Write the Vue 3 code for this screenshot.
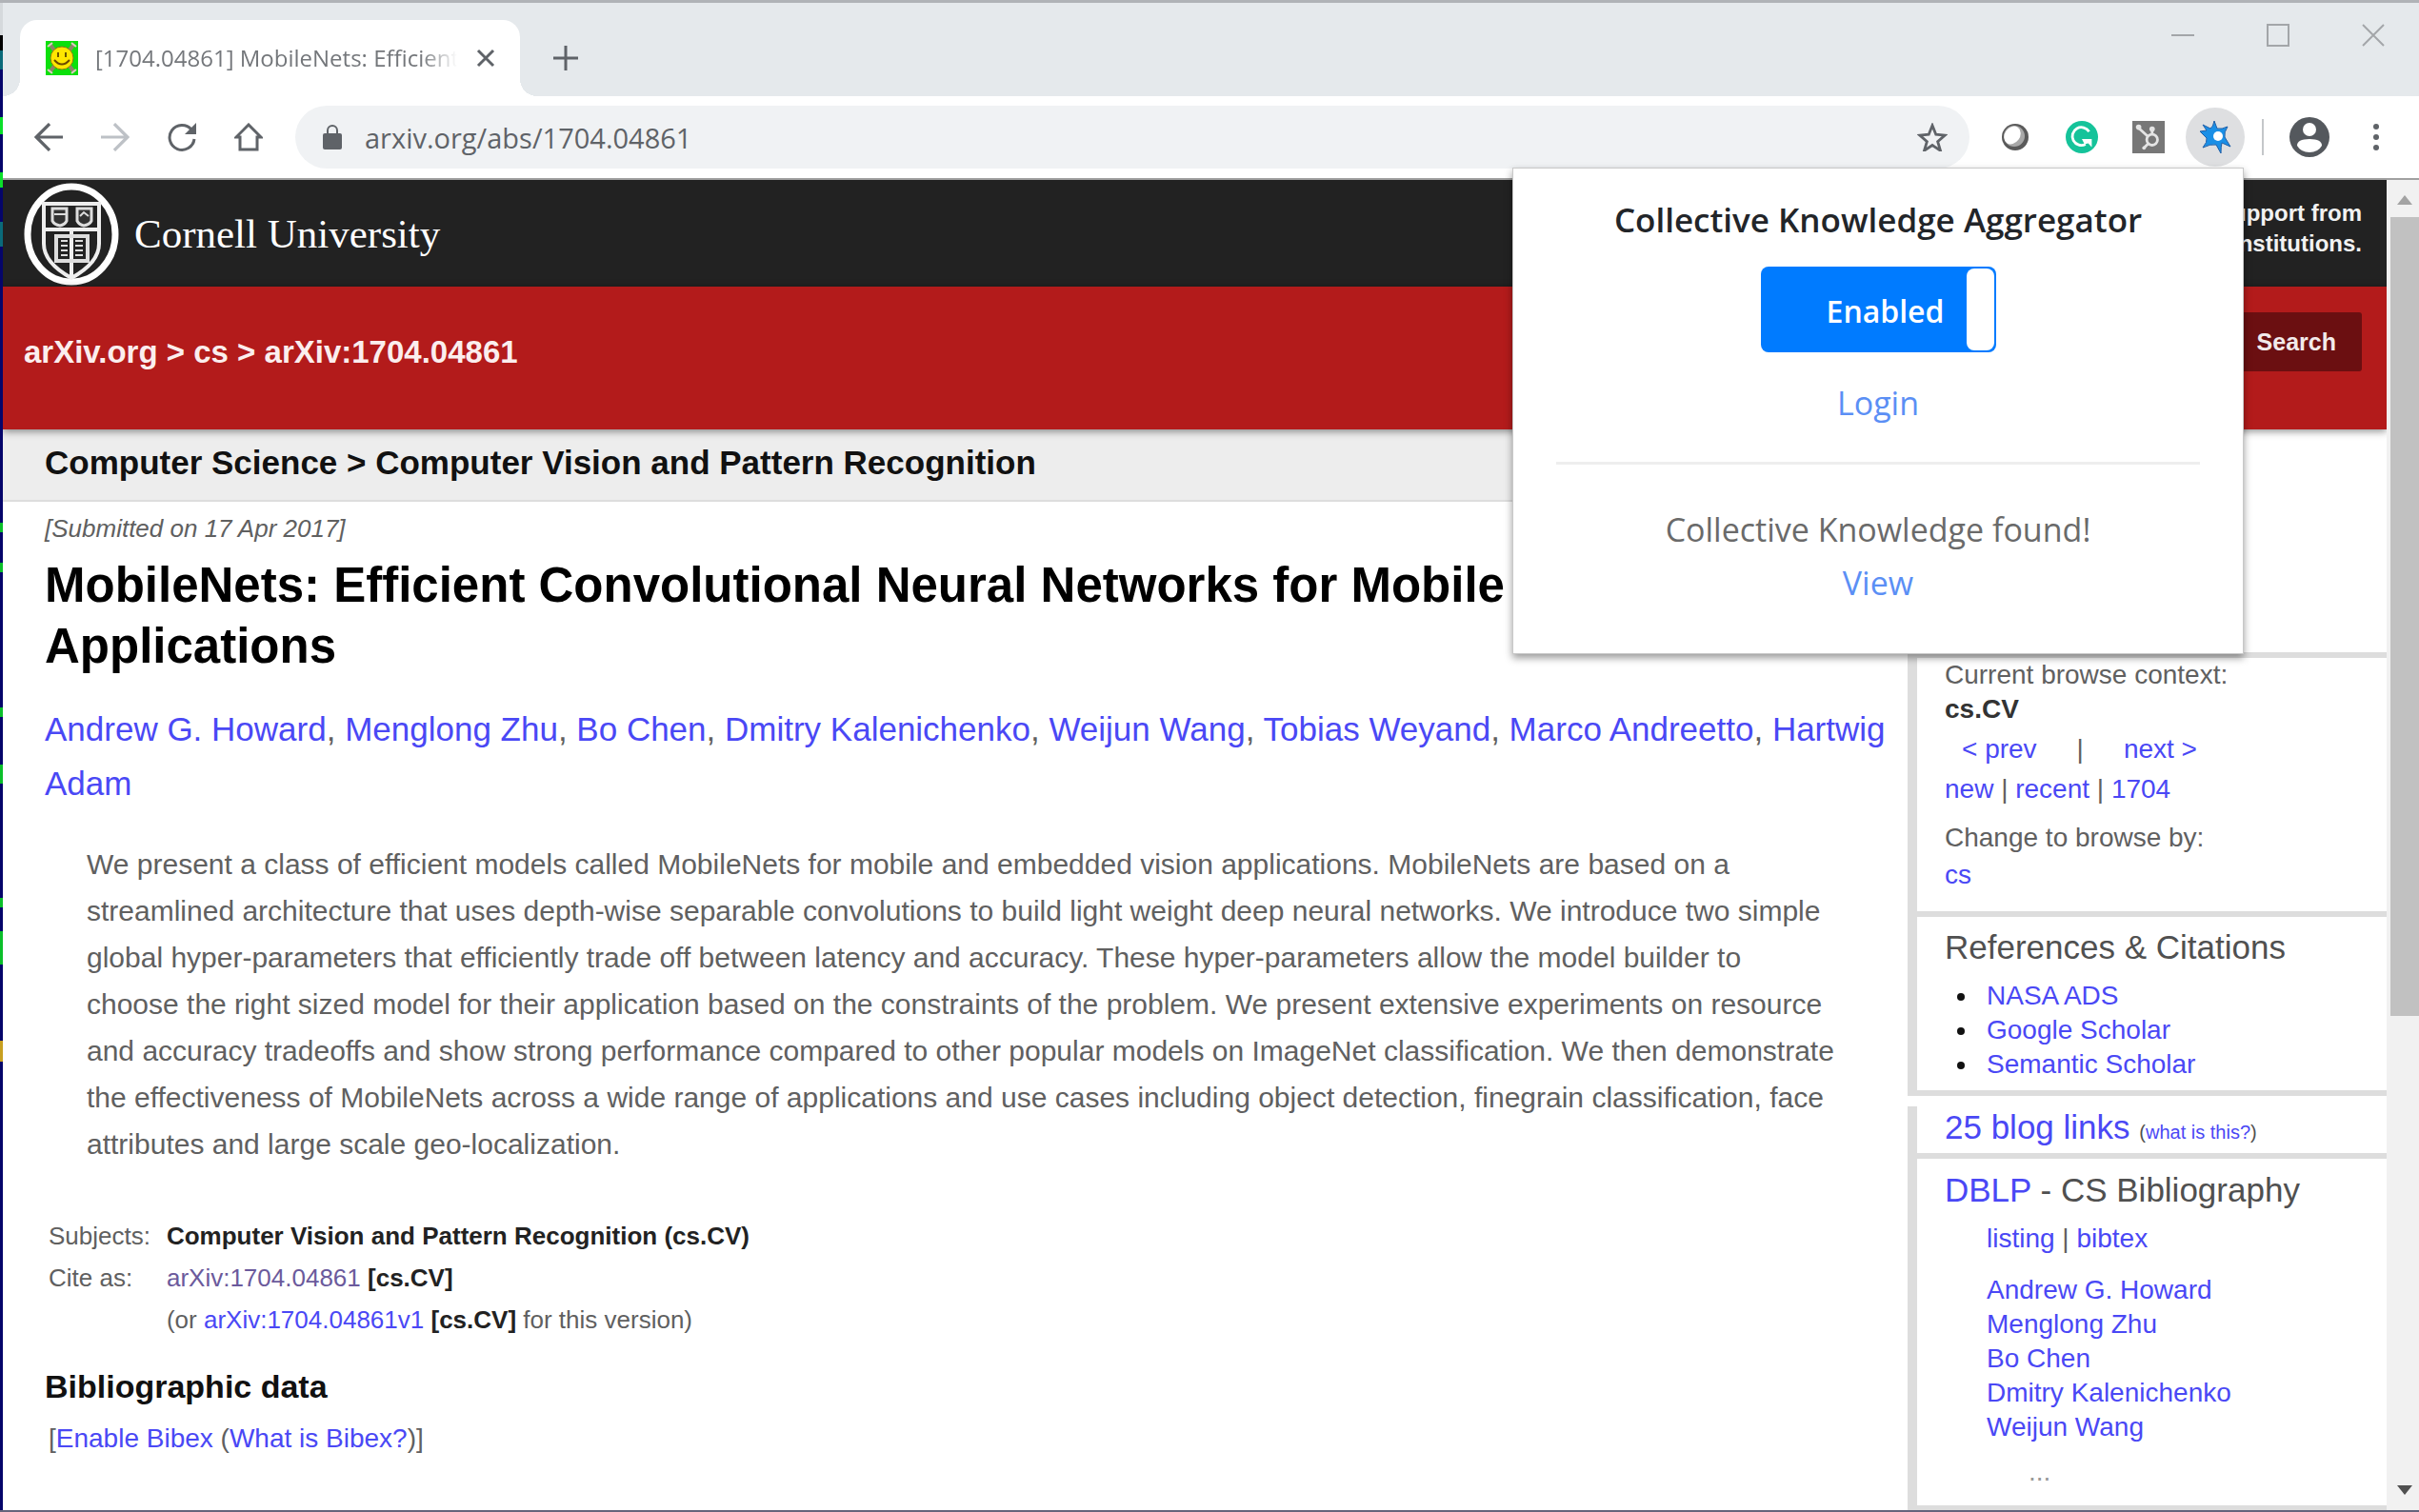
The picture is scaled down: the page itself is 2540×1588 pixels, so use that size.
<template>
  <div class="desktop">
    <div class="desktop-edge"></div>
    <div class="browser">
      <header class="tab-strip">
        <div class="tab">
          <svg class="favicon" viewBox="0 0 34 36">
            <rect width="34" height="36" fill="#0be00b" />
            <path d="M4 3l6 8M30 3l-6 8M4 33l6-8M30 33l-6-8" stroke="#8d8468" stroke-width="4" />
            <path d="M2 6l5-4M32 6l-5-4M2 30l5 4M32 30l-5 4" stroke="#d8d0c0" stroke-width="2" />
            <circle cx="17" cy="18" r="12" fill="#ffe600" stroke="#8a7a10" stroke-width="1" />
            <path d="M13 12v5M21 12v5" stroke="#6a5500" stroke-width="2" />
            <path d="M9 20q8 9 16 0" fill="none" stroke="#6a4a00" stroke-width="2" />
          </svg>
          <span class="tab-title">[1704.04861] MobileNets: Efficient</span>
          <button class="icon-button tab-close" aria-label="Close tab">
            <svg viewBox="0 0 20 20"><path d="M2 2l16 16M18 2L2 18" stroke="#5f6368" stroke-width="3" /></svg>
          </button>
        </div>
        <button class="icon-button new-tab" aria-label="New tab">
          <svg viewBox="0 0 26 26"><path d="M13 0v26M0 13h26" stroke="#5f6368" stroke-width="3" /></svg>
        </button>
        <div class="window-controls">
          <button class="icon-button" aria-label="Minimize">
            <svg viewBox="0 0 24 24"><path d="M0 12h24" stroke="#a3a6a9" stroke-width="2" /></svg>
          </button>
          <button class="icon-button" aria-label="Maximize">
            <svg viewBox="0 0 24 24"><rect x="1" y="1" width="22" height="22" fill="none" stroke="#a3a6a9" stroke-width="2" /></svg>
          </button>
          <button class="icon-button" aria-label="Close">
            <svg viewBox="0 0 24 24"><path d="M1 1l22 22M23 1L1 23" stroke="#a3a6a9" stroke-width="2" /></svg>
          </button>
        </div>
      </header>

      <div class="toolbar">
        <nav class="nav-buttons">
          <button class="icon-button" aria-label="Back">
            <svg viewBox="0 0 28 28"><path d="M28 14H3M15 1L2 14l13 13" fill="none" stroke="#5f6368" stroke-width="3" /></svg>
          </button>
          <button class="icon-button" aria-label="Forward">
            <svg viewBox="0 0 28 28"><path d="M0 14h25M13 1l13 13-13 13" fill="none" stroke="#bdc1c6" stroke-width="3" /></svg>
          </button>
          <button class="icon-button" aria-label="Reload">
            <svg viewBox="0 0 30 30">
              <path d="M25 7A13 13 0 1 0 28 17" fill="none" stroke="#5f6368" stroke-width="3" />
              <path d="M30 0v12H18z" fill="#5f6368" />
            </svg>
          </button>
          <button class="icon-button" aria-label="Home">
            <svg viewBox="0 0 30 30"><path d="M15 2L2 15h4v13h18V15h4z" fill="none" stroke="#5f6368" stroke-width="3" /></svg>
          </button>
        </nav>
        <div class="address-bar">
          <svg class="lock" viewBox="0 0 20 26">
            <rect x="0" y="9" width="20" height="17" rx="2" fill="#5f6368" />
            <path d="M5 10V6a5 5 0 0 1 10 0v4" fill="none" stroke="#5f6368" stroke-width="2" />
          </svg>
          <input v-model="address" class="address" aria-label="Address" />
          <button class="icon-button star" aria-label="Bookmark this page">
            <svg viewBox="0 0 34 32">
              <path d="M17 3l4 10 10 1-8 7 3 10-9-6-9 6 3-10-8-7 10-1z" fill="none" stroke="#5f6368" stroke-width="3" />
            </svg>
          </button>
        </div>
        <div class="extensions">
          <button class="icon-button extension" aria-label="Sphere">
            <svg viewBox="0 0 30 30">
              <circle cx="15" cy="15" r="14" fill="#5a5a5a" />
              <circle cx="14" cy="14" r="11" fill="#a8a8a8" />
              <ellipse cx="12" cy="13" rx="8" ry="10" fill="#fff" transform="rotate(35 12 13)" />
            </svg>
          </button>
          <button class="icon-button extension" aria-label="Grammar check">
            <svg viewBox="0 0 36 36">
              <circle cx="18" cy="18" r="18" fill="#15c39a" />
              <path d="M26 12a10 10 0 1 0-4 14" fill="none" stroke="#fff" stroke-width="3" />
              <path d="M18 20h11v9l-4-4-4 1z" fill="#fff" />
            </svg>
          </button>
          <button class="icon-button extension" aria-label="Sales tools">
            <svg viewBox="0 0 36 36">
              <rect width="36" height="36" fill="#777" />
              <circle cx="22" cy="21" r="6" fill="none" stroke="#e4e4e4" stroke-width="3" />
              <path d="M22 15V9M17 17L7 8M18 25l-5 5" stroke="#e4e4e4" stroke-width="3" />
              <circle cx="7" cy="7" r="3" fill="#e4e4e4" />
              <circle cx="22" cy="9" r="3" fill="#e4e4e4" />
              <circle cx="13" cy="30" r="2" fill="#e4e4e4" />
            </svg>
          </button>
          <button class="icon-button extension active" aria-label="Collective Knowledge">
            <svg viewBox="0 0 34 36">
              <path
                d="M16 1l3 8q5 1 11-2-4 6-3 11l6 10-9-4q-1 4-1 11l-5-9q-6-1-14 3 5-6 4-10L1 12l7-1L4 5l8 4q3-2 4-8z"
                fill="#1a8fe6"
                stroke="#1f5fa8"
                stroke-width="1"
              />
              <circle cx="20" cy="17" r="5" fill="#fff" />
            </svg>
          </button>
          <span class="divider"></span>
          <button class="icon-button profile" aria-label="Profile">
            <svg viewBox="0 0 42 42">
              <circle cx="21" cy="21" r="21" fill="#54585d" />
              <circle cx="21" cy="13" r="7" fill="#fff" />
              <path d="M8 30q0-7 13-7t13 7q-4 7-13 7T8 30z" fill="#fff" />
            </svg>
          </button>
          <button class="icon-button menu" aria-label="Menu">
            <svg viewBox="0 0 8 30">
              <circle cx="4" cy="4" r="3" fill="#5f6368" />
              <circle cx="4" cy="15" r="3" fill="#5f6368" />
              <circle cx="4" cy="26" r="3" fill="#5f6368" />
            </svg>
          </button>
        </div>
      </div>

      <div class="viewport">
        <div class="page">
          <div class="cornell-bar">
            <a href="#" class="cornell">
              <svg class="seal" viewBox="0 0 100 108">
                <ellipse cx="50" cy="54" rx="46" ry="50" fill="none" stroke="#fff" stroke-width="7" />
                <path d="M21 22h58v42q0 20-29 36Q21 84 21 64z" fill="none" stroke="#eee" stroke-width="4" />
                <path d="M21 49h58M50 49v50" stroke="#eee" stroke-width="4" />
                <path d="M30 27h15v13q-2 4-7 5-6-1-8-5zM56 27h15v13q-2 4-8 5-5-1-7-5z" fill="#333" stroke="#ddd" stroke-width="3" />
                <path d="M32 33h12M59 35l4-4 5 4" fill="none" stroke="#ddd" stroke-width="2" />
                <path d="M34 56h33v26H34z" fill="none" stroke="#ddd" stroke-width="4" />
                <path d="M39 61h7M39 66h7M39 71h7M39 76h7M54 61h8M54 66h8M54 71h8M54 76h8" stroke="#ddd" stroke-width="2" />
              </svg>
              <span class="cornell-name">Cornell University</span>
            </a>
            <p class="support">
              We gratefully acknowledge support from<br />
              the Simons Foundation and member institutions.
            </p>
          </div>
          <div class="arxiv-bar">
            <div class="breadcrumbs">
              <a href="#">arXiv.org</a> &gt; <a href="#">cs</a> &gt; arXiv:1704.04861
            </div>
            <button class="search-button">Search</button>
          </div>

          <div class="content">
            <main class="paper">
              <div class="subject-bar">Computer Science &gt; Computer Vision and Pattern Recognition</div>
              <div class="paper-body">
                <p class="dateline">[Submitted on 17 Apr 2017]</p>
                <h1>MobileNets: Efficient Convolutional Neural Networks for Mobile Vision Applications</h1>
                <p class="authors">
                  <template v-for="(author, index) in authors" :key="author"
                    ><a href="#">{{ author }}</a
                    ><template v-if="index < authors.length - 1">, </template></template
                  >
                </p>
                <p class="abstract">
                  We present a class of efficient models called MobileNets for mobile and embedded vision applications. MobileNets are based on a<br />
                  streamlined architecture that uses depth-wise separable convolutions to build light weight deep neural networks. We introduce two simple<br />
                  global hyper-parameters that efficiently trade off between latency and accuracy. These hyper-parameters allow the model builder to<br />
                  choose the right sized model for their application based on the constraints of the problem. We present extensive experiments on resource<br />
                  and accuracy tradeoffs and show strong performance compared to other popular models on ImageNet classification. We then demonstrate<br />
                  the effectiveness of MobileNets across a wide range of applications and use cases including object detection, finegrain classification, face<br />
                  attributes and large scale geo-localization.
                </p>
                <table class="metadata">
                  <tbody>
                    <tr>
                      <th scope="row">Subjects:</th>
                      <td><b>Computer Vision and Pattern Recognition (cs.CV)</b></td>
                    </tr>
                    <tr>
                      <th scope="row">Cite as:</th>
                      <td><a href="#" class="visited">arXiv:1704.04861</a> <b>[cs.CV]</b></td>
                    </tr>
                    <tr>
                      <th></th>
                      <td>(or <a href="#">arXiv:1704.04861v1</a> <b>[cs.CV]</b> for this version)</td>
                    </tr>
                  </tbody>
                </table>
                <h2>Bibliographic data</h2>
                <p class="bibex">[<a href="#">Enable Bibex</a> (<a href="#">What is Bibex?</a>)]</p>
              </div>
            </main>

            <aside class="sidebar">
              <div class="panel">
                <section class="browse">
                  <p>Current browse context:</p>
                  <p><b>cs.CV</b></p>
                  <p class="prev-next"><a href="#">&lt; prev</a><span>|</span><a href="#">next &gt;</a></p>
                  <p class="list-nav"><a href="#">new</a> | <a href="#">recent</a> | <a href="#">1704</a></p>
                  <p class="change">Change to browse by:</p>
                  <p class="list-nav"><a href="#">cs</a></p>
                </section>
                <section class="references">
                  <h3>References &amp; Citations</h3>
                  <ul>
                    <li v-for="service in services" :key="service"><a href="#">{{ service }}</a></li>
                  </ul>
                </section>
              </div>
              <div class="panel">
                <section class="blogs">
                  <h3><a href="#">25 blog links</a> <small>(<a href="#">what is this?</a>)</small></h3>
                </section>
                <section class="dblp">
                  <h3><a href="#">DBLP</a> - CS Bibliography</h3>
                  <p class="indent"><a href="#">listing</a> | <a href="#">bibtex</a></p>
                  <ul class="indent dblp-authors">
                    <li v-for="author in authors.slice(0, 5)" :key="author"><a href="#">{{ author }}</a></li>
                  </ul>
                  <p class="more">...</p>
                </section>
              </div>
            </aside>
          </div>
        </div>

        <div class="scrollbar">
          <svg viewBox="0 0 16 10"><path d="M8 0l8 10H0z" fill="#a3a3a3" /></svg>
          <div class="track"><div class="thumb"></div></div>
          <svg viewBox="0 0 16 10"><path d="M8 10L0 0h16z" fill="#505050" /></svg>
        </div>
      </div>

      <div class="popup">
        <h4>Collective Knowledge Aggregator</h4>
        <button class="toggle" :aria-pressed="enabled" @click="enabled = !enabled">
          <span class="toggle-label">{{ enabled ? 'Enabled' : 'Disabled' }}</span>
          <span class="knob"></span>
        </button>
        <a href="#" class="login">Login</a>
        <hr />
        <p>Collective Knowledge found!</p>
        <a href="#">View</a>
      </div>
    </div>
  </div>
</template>

<script setup>
import { ref } from 'vue'

const address = ref('arxiv.org/abs/1704.04861')
const enabled = ref(true)

const authors = [
  'Andrew G. Howard',
  'Menglong Zhu',
  'Bo Chen',
  'Dmitry Kalenichenko',
  'Weijun Wang',
  'Tobias Weyand',
  'Marco Andreetto',
  'Hartwig Adam',
]

const services = ['NASA ADS', 'Google Scholar', 'Semantic Scholar']
</script>

<style>
body {
  margin: 0;
}
</style>

<style scoped>
* {
  box-sizing: border-box;
}

p,
h1,
h2,
h3,
h4,
ul {
  margin: 0;
  padding: 0;
}

a {
  color: #4a48f5;
  text-decoration: none;
}

b {
  color: #222;
}

.desktop {
  display: flex;
  height: 100vh;
  overflow: hidden;
  border-top: 3px solid #b0b3b7;
  border-bottom: 2px solid #65647c;
  font-family: 'Liberation Sans', Arial, sans-serif;
  color: #606060;
  background: #fff;
}

.desktop-edge {
  width: 3px;
  background: linear-gradient(
    #d5d9dc 0 34px,
    #000 34px 50px,
    #0a6a7a 50px 70px,
    #05056a 70px 120px,
    #0bdf2a 120px 138px,
    #05056a 138px 178px,
    #0bdf2a 178px 194px,
    #05056a 194px 230px,
    #0a6a7a 230px 256px,
    #05056a 256px 546px,
    #0bbf2a 546px 556px,
    #05056a 556px 588px,
    #0bbf2a 588px 598px,
    #05056a 598px 740px,
    #0bbf2a 740px 750px,
    #05056a 750px 800px,
    #0bbf2a 800px 820px,
    #05056a 820px 940px,
    #0bbf2a 940px 950px,
    #05056a 950px 975px,
    #0bbf2a 975px 1010px,
    #05056a 1010px 1090px,
    #c8a020 1090px 1112px,
    #05056a 1112px
  );
}

.browser {
  position: relative;
  display: flex;
  flex: 1;
  flex-direction: column;
  min-width: 0;
}

.icon-button {
  display: flex;
  align-items: center;
  justify-content: center;
  padding: 0;
  border: 0;
  background: none;
}

.icon-button svg {
  display: block;
  width: 100%;
}

/* tab strip */
.tab-strip {
  display: flex;
  align-items: flex-end;
  height: 98px;
  padding-left: 18px;
  background: #e5e9ec;
}

.tab {
  position: relative;
  display: flex;
  align-items: center;
  width: 525px;
  height: 80px;
  padding: 0 26px 0 27px;
  border-radius: 18px 18px 0 0;
  background: #fff;
}

.tab::before,
.tab::after {
  content: '';
  position: absolute;
  bottom: 0;
  width: 18px;
  height: 18px;
}

.tab::before {
  right: 100%;
  background: radial-gradient(circle at 0 0, transparent 18px, #fff 18px);
}

.tab::after {
  left: 100%;
  background: radial-gradient(circle at 100% 0, transparent 18px, #fff 18px);
}

.favicon {
  width: 34px;
  height: 36px;
}

.tab-title {
  flex: 1;
  margin: 0 20px 0 18px;
  overflow: hidden;
  font-family: 'Open Sans', sans-serif;
  font-size: 24px;
  line-height: 36px;
  white-space: nowrap;
  color: #74777b;
  mask-image: linear-gradient(to right, #000 90%, transparent);
}

.tab-close {
  width: 20px;
}

.new-tab {
  width: 26px;
  margin: 0 0 27px 35px;
}

.window-controls {
  display: flex;
  align-self: flex-start;
  gap: 76px;
  margin: 22px 36px 0 auto;
}

.window-controls .icon-button {
  width: 24px;
}

/* toolbar */
.toolbar {
  display: flex;
  align-items: center;
  height: 88px;
  padding: 0 41px 0 33px;
  border-bottom: 2px solid #a0a0a0;
  background: #fff;
}

.nav-buttons {
  display: flex;
  gap: 40px;
}

.nav-buttons .icon-button {
  width: 30px;
}

.address-bar {
  display: flex;
  flex: 1;
  align-items: center;
  height: 66px;
  margin-left: 34px;
  padding: 0 23px 0 29px;
  border-radius: 33px;
  background: #f0f2f4;
}

.lock {
  width: 20px;
  height: 26px;
}

.address {
  flex: 1;
  margin-left: 24px;
  padding: 0;
  border: 0;
  outline: none;
  font-family: 'Open Sans', sans-serif;
  font-size: 29px;
  color: #5f6368;
  background: none;
}

.star {
  width: 32px;
}

.extensions {
  display: flex;
  align-items: center;
}

.extension {
  width: 62px;
  height: 62px;
  margin-left: 8px;
  border-radius: 50%;
}

.extension:first-child {
  margin-left: 17px;
}

.extension svg {
  width: 34px;
}

.extension:first-child svg {
  width: 30px;
}

.extension.active {
  background: #dedfe1;
}

.divider {
  width: 2px;
  height: 38px;
  margin: 0 27px 0 18px;
  background: #c4c7ca;
}

.profile {
  width: 42px;
}

.menu {
  width: 8px;
  margin-left: 45px;
}

/* page */
.viewport {
  display: flex;
  flex: 1;
  min-height: 0;
}

.page {
  flex: 1;
  min-width: 0;
  overflow: hidden;
}

.cornell-bar {
  display: flex;
  align-items: center;
  justify-content: space-between;
  height: 112px;
  padding: 2px 26px 0 22px;
  background: #222;
}

.cornell {
  display: flex;
  align-items: center;
  gap: 16px;
}

.seal {
  width: 100px;
  height: 108px;
}

.cornell-name {
  font-family: 'Liberation Serif', serif;
  font-size: 43px;
  line-height: 50px;
  color: #fff;
}

.support {
  padding-bottom: 12px;
  font-size: 24px;
  font-weight: bold;
  line-height: 32px;
  text-align: right;
  color: #f2f2f2;
}

.arxiv-bar {
  position: relative;
  display: flex;
  align-items: flex-start;
  justify-content: space-between;
  height: 150px;
  padding: 27px 26px 0 22px;
  background: #b31b1b;
  box-shadow: 0 2px 8px rgba(0, 0, 0, 0.45);
}

.breadcrumbs {
  padding-top: 20px;
  font-size: 33px;
  font-weight: bold;
  line-height: 44px;
  color: #fbeeee;
}

.breadcrumbs a {
  color: inherit;
}

.search-button {
  padding: 0 27px;
  border: 0;
  border-radius: 3px;
  font-family: inherit;
  font-size: 25px;
  font-weight: bold;
  line-height: 62px;
  color: #f2eaea;
  background: #6b0f11;
}

.content {
  display: grid;
  grid-template-columns: 1fr 503px;
}

.subject-bar {
  height: 76px;
  padding-left: 44px;
  border-bottom: 2px solid #ddd;
  font-size: 35px;
  font-weight: bold;
  line-height: 70px;
  color: #111;
  background: #ededed;
}

.paper-body {
  padding: 10px 16px 0 44px;
}

.dateline {
  font-size: 26px;
  font-style: italic;
  line-height: 36px;
}

h1 {
  margin-top: 10px;
  font-size: 51px;
  line-height: 64px;
  color: #000;
}

.authors {
  margin-top: 26px;
  font-size: 35px;
  line-height: 57px;
}

.abstract {
  margin: 32px 0 0 44px;
  font-size: 30px;
  line-height: 49px;
}

.metadata {
  margin-top: 50px;
  border-collapse: collapse;
  font-size: 26px;
  line-height: 44px;
}

.metadata th {
  padding: 0 17px 0 4px;
  font-weight: normal;
  text-align: left;
}

.metadata td {
  padding: 0;
}

.visited {
  color: #6b5a9c;
}

h2 {
  margin-top: 26px;
  font-size: 34px;
  line-height: 44px;
  color: #111;
}

.bibex {
  margin-top: 13px;
  padding-left: 4px;
  font-size: 28px;
  line-height: 40px;
}

/* sidebar */
.sidebar {
  padding-top: 234px;
  font-size: 28px;
  line-height: 36px;
}

.panel {
  border-left: 10px solid #ddd;
}

.panel + .panel {
  margin-top: 11px;
}

.panel section {
  padding-left: 29px;
  border-bottom: 6px solid #ddd;
}

.panel .browse {
  padding-bottom: 17px;
  border-top: 6px solid #ddd;
}

.browse b {
  color: #333;
}

.prev-next {
  display: flex;
  gap: 42px;
  margin-top: 3px;
  padding-left: 18px;
  line-height: 42px;
}

.list-nav {
  line-height: 42px;
}

.change {
  margin-top: 12px;
}

h3 {
  font-size: 35px;
  font-weight: normal;
  line-height: 40px;
  color: #505050;
}

small {
  font-size: 20px;
  line-height: 20px;
}

.references {
  padding-top: 12px;
  padding-bottom: 9px;
}

.references ul {
  margin-top: 13px;
  padding-left: 36px;
}

.references li {
  padding-left: 8px;
}

.references li::marker {
  color: #111;
}

.blogs {
  padding-top: 2px;
  padding-bottom: 7px;
}

.dblp {
  padding-top: 13px;
  padding-bottom: 17px;
}

.indent {
  margin-top: 13px;
  padding-left: 44px;
}

.dblp-authors {
  margin-top: 18px;
  list-style: none;
}

.more {
  margin-top: 11px;
  padding-left: 88px;
  color: #999;
}

/* scrollbar */
.scrollbar {
  display: flex;
  flex-direction: column;
  align-items: center;
  width: 34px;
  padding: 16px 0;
  background: #f1f1f1;
}

.scrollbar svg {
  width: 16px;
  height: 10px;
  margin-left: 4px;
}

.track {
  display: flex;
  flex: 1;
  flex-direction: column;
  align-self: stretch;
  margin: 13px 0 13px 4px;
}

.track::after {
  content: '';
  flex: 4;
}

.thumb {
  flex: 7;
  background: #c1c1c1;
}

/* extension popup */
.popup {
  position: absolute;
  top: 173px;
  right: 184px;
  display: flex;
  flex-direction: column;
  align-items: center;
  width: 768px;
  padding: 32px 45px 46px;
  border: 1px solid #c8c8c8;
  font-family: 'Open Sans', sans-serif;
  font-size: 34px;
  line-height: 56px;
  color: #6a6a6a;
  background: #fff;
  box-shadow: 0 4px 8px rgba(0, 0, 0, 0.4);
}

.popup a {
  color: #5b8ff5;
}

.popup h4 {
  font-size: 35px;
  font-weight: 600;
  line-height: 44px;
  color: #222529;
}

.toggle {
  display: flex;
  align-items: stretch;
  width: 247px;
  height: 90px;
  margin-top: 27px;
  padding: 2px;
  border: 0;
  border-radius: 8px;
  font-family: inherit;
  font-size: 32px;
  font-weight: 600;
  color: #fff;
  background: #007bff;
}

.toggle-label {
  flex: 1;
  padding-left: 44px;
  line-height: 90px;
}

.knob {
  width: 29px;
  border-radius: 8px;
  background: #fff;
}

.login {
  margin-top: 25px;
}

.popup hr {
  width: 100%;
  margin: 34px 0 40px;
  border: 0;
  border-top: 3px solid #eee;
}
</style>
